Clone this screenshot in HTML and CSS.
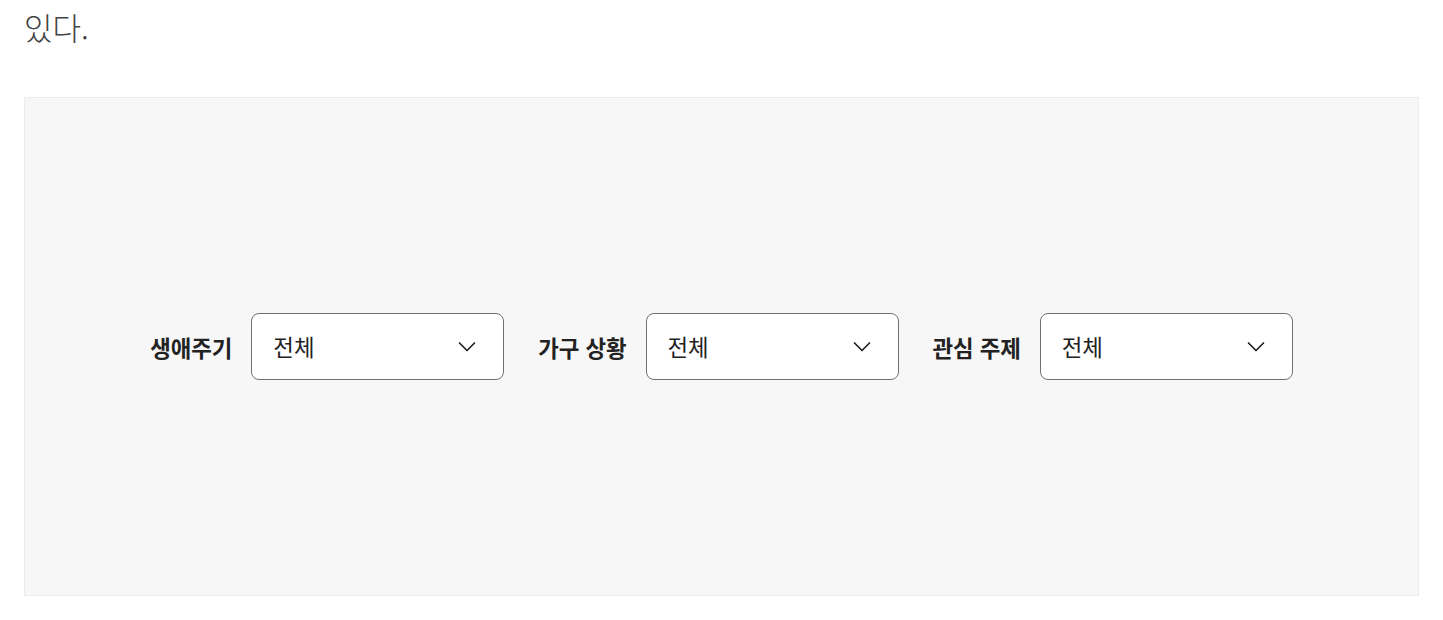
FILE: index.html
```html
<!DOCTYPE html>
<html lang="ko">
<head>
<meta charset="utf-8">
<link rel="stylesheet" href="styles.css">
</head>
<body>
<div class="page">
  <p class="lead">있다.</p>
  <section class="filter-panel">
    <div class="filter-row">
      <div class="filter">
        <span class="filter-label">생애주기</span>
        <div class="select"><span class="select-value">전체</span>
          <svg class="chev" width="20" height="12" viewBox="0 0 20 12"><path d="M2.5 2 L10 9.5 L17.5 2" fill="none" stroke="#222" stroke-width="1.7" stroke-linecap="round" stroke-linejoin="round"/></svg>
        </div>
      </div>
      <div class="filter">
        <span class="filter-label">가구 상황</span>
        <div class="select"><span class="select-value">전체</span>
          <svg class="chev" width="20" height="12" viewBox="0 0 20 12"><path d="M2.5 2 L10 9.5 L17.5 2" fill="none" stroke="#222" stroke-width="1.7" stroke-linecap="round" stroke-linejoin="round"/></svg>
        </div>
      </div>
      <div class="filter">
        <span class="filter-label">관심 주제</span>
        <div class="select"><span class="select-value">전체</span>
          <svg class="chev" width="20" height="12" viewBox="0 0 20 12"><path d="M2.5 2 L10 9.5 L17.5 2" fill="none" stroke="#222" stroke-width="1.7" stroke-linecap="round" stroke-linejoin="round"/></svg>
        </div>
      </div>
    </div>
  </section>
</div>
</body>
</html>
```

FILE: styles.css
```css
html, body {
  margin: 0;
  padding: 0;
  background: #ffffff;
}
body {
  font-family: "Noto Sans CJK KR", "Noto Sans", sans-serif;
  color: #222;
}
.page {
  padding: 0 24px;
}
.lead {
  margin: 0;
  font-size: 31px;
  line-height: 44px;
  padding-top: 5px;
  height: 97px;
  box-sizing: border-box;
  color: #444;
  font-weight: 300;
}
.filter-panel {
  background: #f7f7f7;
  border: 1px solid #ebebeb;
  height: 499px;
  box-sizing: border-box;
  display: flex;
  align-items: center;
  justify-content: center;
}
.filter-row {
  display: flex;
  align-items: center;
  gap: 34px;
}
.filter {
  display: flex;
  align-items: center;
  gap: 19px;
}
.filter-label {
  font-size: 22.4px;
  font-weight: 700;
  color: #222;
  letter-spacing: -0.1px;
}
.select {
  width: 253px;
  height: 67px;
  box-sizing: border-box;
  border: 1px solid #707070;
  border-radius: 8px;
  background: #fff;
  display: flex;
  align-items: center;
  justify-content: space-between;
  padding: 0 26px 2px 21px;
}
.select-value {
  font-size: 22.4px;
  color: #222;
}
.chev {
  display: block;
  margin-top: 2px;
}
```
